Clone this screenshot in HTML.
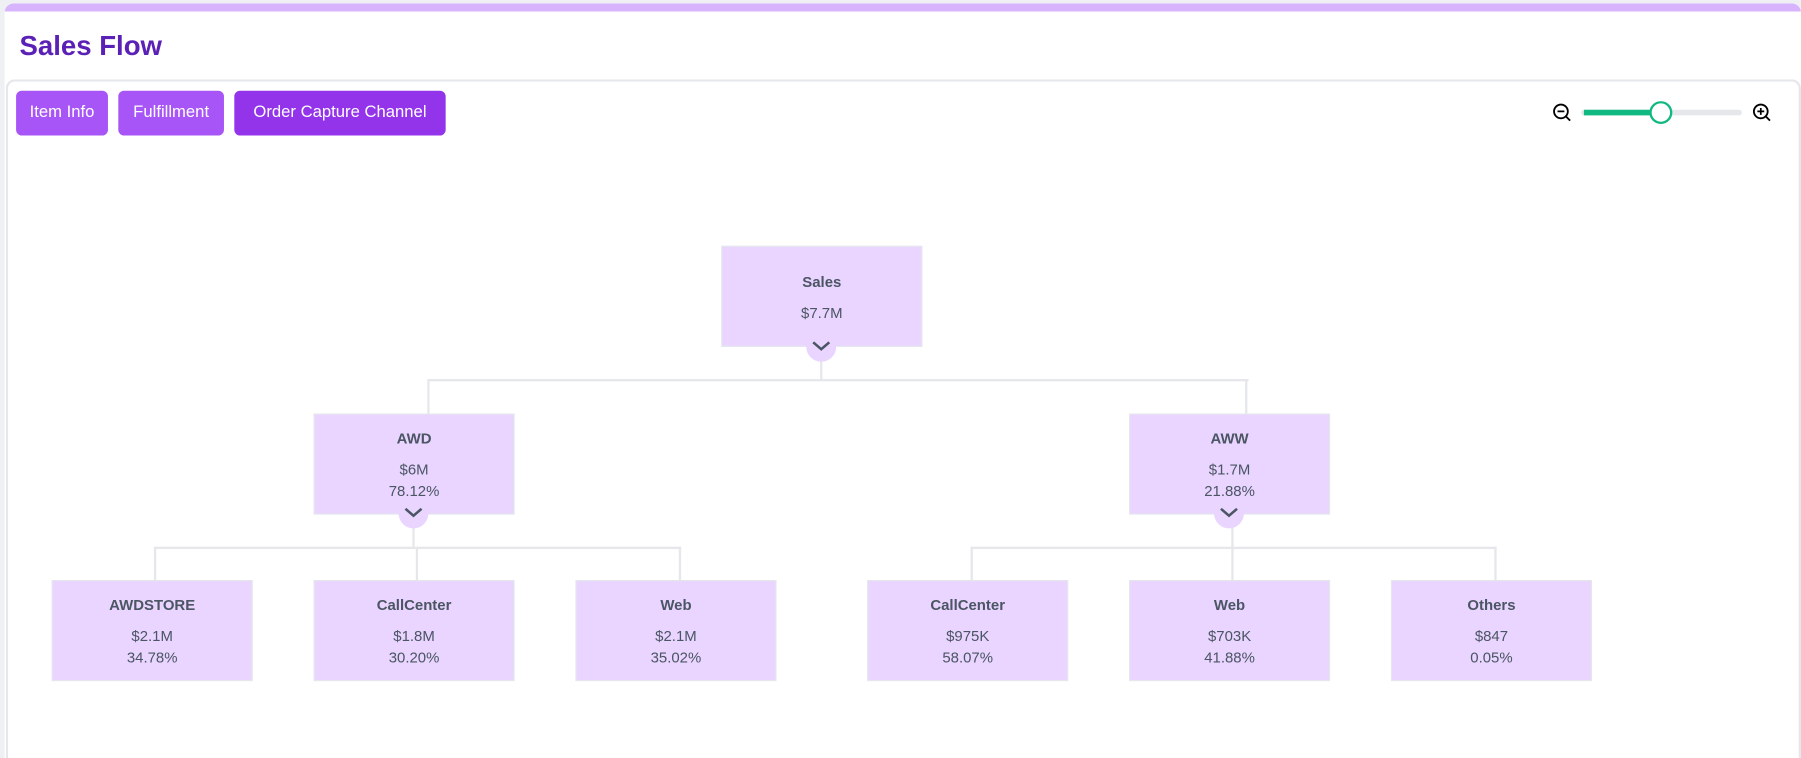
<!DOCTYPE html>
<html><head><meta charset="utf-8"><style>
html,body{margin:0;padding:0;width:1801px;height:758px;overflow:hidden;background:#fff;}
#s{position:absolute;left:0;top:0;width:1568px;height:660px;transform:scale(1.14859);transform-origin:0 0;font-family:"Liberation Sans",sans-serif;background:#eef0f3;overflow:hidden;}
.card{position:absolute;left:4px;top:3px;width:1564px;height:657px;background:#fff;border-radius:8px 8px 0 0;overflow:hidden;}
.bar{position:absolute;left:0;top:0;right:0;height:7px;background:#d8b4fe;}
.title{position:absolute;left:13px;top:24px;font-size:24px;font-weight:bold;color:#5b21b6;}
.panel{position:absolute;left:1px;top:66px;width:1559px;height:591px;border:2px solid #e5e7eb;border-bottom:none;border-radius:8px 8px 0 0;background:#fff;}
.btn{position:absolute;top:79px;height:39px;line-height:39px;border-radius:5px;background:#a855f7;color:#fff;font-size:14.5px;text-align:center;}
.n{position:absolute;width:173px;height:86px;background:#e9d5ff;border:1px solid #e5e7eb;color:#4b5563;font-size:13px;text-align:center;}
.n b{display:block;font-size:13px;font-weight:600;}
.l{position:absolute;background:#e5e7eb;}
.c{position:absolute;width:26px;height:26px;border-radius:50%;background:#e9d5ff;}
</style></head><body><div id="s">
<div class="card"><div class="bar"></div><div class="title">Sales Flow</div><div class="panel"></div></div>
<div class="btn" style="left:14px;width:80px">Item Info</div>
<div class="btn" style="left:103px;width:92px">Fulfillment</div>
<div class="btn" style="left:204px;width:184px;background:#9333ea">Order Capture Channel</div>
<svg style="position:absolute;left:1350px;top:88px" width="200" height="22">
<circle cx="9" cy="9" r="6" fill="none" stroke="#000" stroke-width="1.6"/><line x1="13" y1="13" x2="17" y2="17" stroke="#000" stroke-width="1.6"/><line x1="6" y1="9" x2="12" y2="9" stroke="#000" stroke-width="1.5"/>
<line x1="29" y1="10" x2="164" y2="10" stroke="#e5e7eb" stroke-width="5" stroke-linecap="round"/>
<line x1="29" y1="10" x2="96" y2="10" stroke="#10b981" stroke-width="5"/>
<circle cx="96" cy="10" r="9" fill="#fff" stroke="#10b981" stroke-width="2"/>
<circle cx="183" cy="9" r="6" fill="none" stroke="#000" stroke-width="1.6"/><line x1="187" y1="13" x2="191" y2="17" stroke="#000" stroke-width="1.6"/><line x1="180" y1="9" x2="186" y2="9" stroke="#000" stroke-width="1.5"/><line x1="183" y1="6" x2="183" y2="12" stroke="#000" stroke-width="1.5"/>
</svg>
<div class="l" style="left:714px;top:302px;width:2px;height:29px"></div>
<div class="l" style="left:373px;top:330px;width:714px;height:2px"></div>
<div class="l" style="left:372px;top:330px;width:2px;height:30px"></div>
<div class="l" style="left:1084px;top:330px;width:2px;height:30px"></div>
<div class="l" style="left:359px;top:447px;width:2px;height:30px"></div>
<div class="l" style="left:134px;top:476px;width:459px;height:2px"></div>
<div class="l" style="left:134px;top:476px;width:2px;height:29px"></div>
<div class="l" style="left:362px;top:476px;width:2px;height:29px"></div>
<div class="l" style="left:591px;top:476px;width:2px;height:29px"></div>
<div class="l" style="left:1072px;top:447px;width:2px;height:30px"></div>
<div class="l" style="left:845px;top:476px;width:458px;height:2px"></div>
<div class="l" style="left:845px;top:476px;width:2px;height:29px"></div>
<div class="l" style="left:1072px;top:476px;width:2px;height:29px"></div>
<div class="l" style="left:1301px;top:476px;width:2px;height:29px"></div>
<div class="n" style="left:628px;top:214px"><b style="margin-top:23px">Sales</b><div style="margin-top:12px">$7.7M</div></div>
<div class="n" style="left:273px;top:360px"><b style="margin-top:13px">AWD</b><div style="margin-top:12px">$6M</div><div style="margin-top:4px">78.12%</div></div>
<div class="n" style="left:983px;top:360px"><b style="margin-top:13px">AWW</b><div style="margin-top:12px">$1.7M</div><div style="margin-top:4px">21.88%</div></div>
<div class="n" style="left:45px;top:505px"><b style="margin-top:13px">AWDSTORE</b><div style="margin-top:12px">$2.1M</div><div style="margin-top:4px">34.78%</div></div>
<div class="n" style="left:273px;top:505px"><b style="margin-top:13px">CallCenter</b><div style="margin-top:12px">$1.8M</div><div style="margin-top:4px">30.20%</div></div>
<div class="n" style="left:501px;top:505px"><b style="margin-top:13px">Web</b><div style="margin-top:12px">$2.1M</div><div style="margin-top:4px">35.02%</div></div>
<div class="n" style="left:755px;top:505px"><b style="margin-top:13px">CallCenter</b><div style="margin-top:12px">$975K</div><div style="margin-top:4px">58.07%</div></div>
<div class="n" style="left:983px;top:505px"><b style="margin-top:13px">Web</b><div style="margin-top:12px">$703K</div><div style="margin-top:4px">41.88%</div></div>
<div class="n" style="left:1211px;top:505px"><b style="margin-top:13px">Others</b><div style="margin-top:12px">$847</div><div style="margin-top:4px">0.05%</div></div>
<div class="c" style="left:702px;top:289px"><svg width="26" height="26"><path d="M6 9 L13 15 L20 9" fill="none" stroke="#4b5563" stroke-width="2.2"/></svg></div>
<div class="c" style="left:347px;top:434px"><svg width="26" height="26"><path d="M6 9 L13 15 L20 9" fill="none" stroke="#4b5563" stroke-width="2.2"/></svg></div>
<div class="c" style="left:1057px;top:434px"><svg width="26" height="26"><path d="M6 9 L13 15 L20 9" fill="none" stroke="#4b5563" stroke-width="2.2"/></svg></div>
</div></body></html>
